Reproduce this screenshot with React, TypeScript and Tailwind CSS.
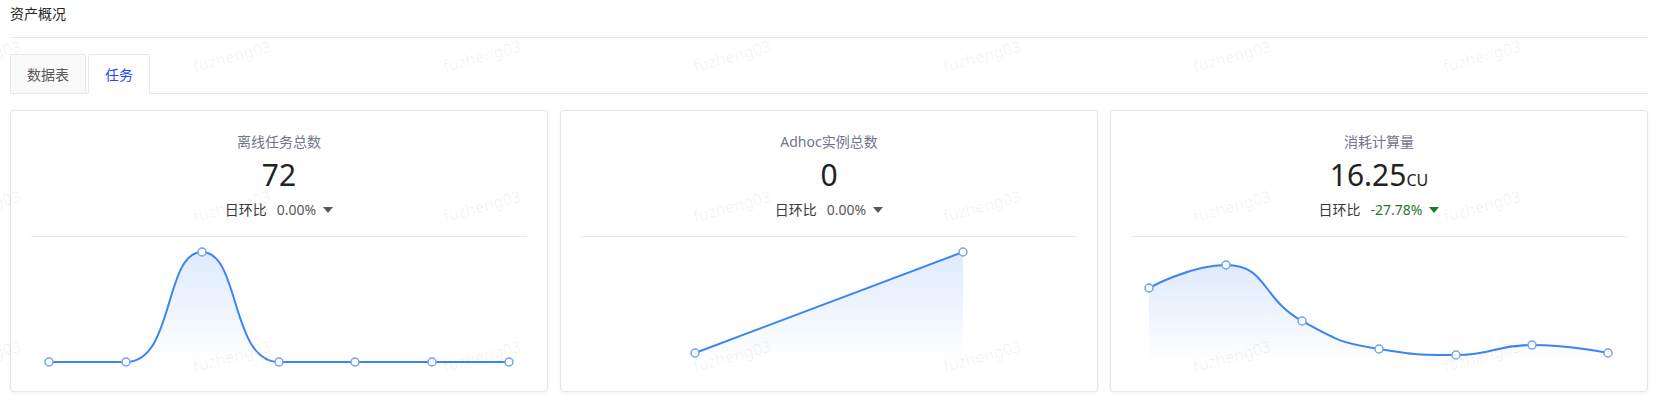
import React from "react";

type Pt = [number, number];

function smoothPath(p: Pt[], s = 0.5): string {
  const n = p.length;
  let d = `M${p[0][0]},${p[0][1]}`;
  let c0x = p[0][0];
  let c0y = p[0][1];
  for (let i = 1; i < n; i++) {
    const [x, y] = p[i];
    const [px, py] = p[i - 1];
    if (i === n - 1) {
      d += ` C${c0x},${c0y} ${x},${y} ${x},${y}`;
      break;
    }
    const [nx, ny] = p[i + 1];
    let vx = nx - px;
    let vy = ny - py;
    const lp = Math.hypot(x - px, y - py);
    const ln = Math.hypot(nx - x, ny - y);
    const r = ln / (ln + lp);
    let ncx = x + vx * s * r;
    let ncy = y + vy * s * r;
    ncx = Math.min(ncx, Math.max(nx, x));
    ncy = Math.min(ncy, Math.max(ny, y));
    ncx = Math.max(ncx, Math.min(nx, x));
    ncy = Math.max(ncy, Math.min(ny, y));
    vx = ncx - x;
    vy = ncy - y;
    let c1x = x - (vx * lp) / ln;
    let c1y = y - (vy * lp) / ln;
    c1x = Math.min(c1x, Math.max(px, x));
    c1y = Math.min(c1y, Math.max(py, y));
    c1x = Math.max(c1x, Math.min(px, x));
    c1y = Math.max(c1y, Math.min(py, y));
    vx = x - c1x;
    vy = y - c1y;
    ncx = x + (vx * ln) / lp;
    ncy = y + (vy * ln) / lp;
    d += ` C${c0x},${c0y} ${c1x},${c1y} ${x},${y}`;
    c0x = ncx;
    c0y = ncy;
  }
  return d;
}

const BASE = 125;

function Chart({ id, pts }: { id: string; pts: Pt[] }) {
  const line = smoothPath(pts);
  const area = `${line} L${pts[pts.length - 1][0]},${BASE} L${pts[0][0]},${BASE} Z`;
  return (
    <svg width="536" height="153" viewBox="0 0 536 153" className="block">
      <defs>
        <linearGradient id={id} x1="0" y1="0" x2="0" y2="1">
          <stop offset="0" stopColor="#3c85f0" stopOpacity="0.17" />
          <stop offset="1" stopColor="#3c85f0" stopOpacity="0" />
        </linearGradient>
      </defs>
      <path d={area} fill={`url(#${id})`} />
      <path d={line} fill="none" stroke="#3c85f0" strokeWidth="2" />
      {pts.map(([x, y], i) => (
        <circle key={i} cx={x} cy={y} r="4" fill="#fff" stroke="#6fa5f5" strokeWidth="1.5" />
      ))}
    </svg>
  );
}

function Triangle({ color }: { color: "gray" | "green" }) {
  return (
    <span
      className={
        color === "gray"
          ? "ml-[7px] inline-block h-0 w-0 border-l-[5px] border-r-[5px] border-t-[6px] border-l-transparent border-r-transparent border-t-[#595959]"
          : "ml-[7px] inline-block h-0 w-0 border-l-[5px] border-r-[5px] border-t-[6px] border-l-transparent border-r-transparent border-t-[#1f7a1f]"
      }
    />
  );
}

function Card({
  title,
  value,
  unit,
  pct,
  down,
  id,
  pts,
}: {
  title: string;
  value: string;
  unit?: string;
  pct: string;
  down?: boolean;
  id: string;
  pts: Pt[];
}) {
  return (
    <div className="h-[282px] rounded-[4px] border border-[#e5e5ef] bg-white pt-[21px] shadow-[0_1px_4px_rgba(0,0,0,0.05)]">
      <div className="h-[20px] text-center text-[14px] leading-[20px] text-[#72758c]">{title}</div>
      <div className="mt-[3px] h-[40px] text-center text-[30px] leading-[40px] text-[#222]">
        {value}
        {unit && <span className="text-[16px] leading-none">{unit}</span>}
      </div>
      <div className="mt-[5px] flex h-[20px] items-center justify-center text-[14px] leading-[20px]">
        <span className="text-[#3a3a3a]">日环比</span>
        <span className={down ? "ml-[10px] text-[#1f7a1f]" : "ml-[10px] text-[#595959]"}>{pct}</span>
        <Triangle color={down ? "green" : "gray"} />
      </div>
      <div className="mx-[20px] mt-[16px] h-px bg-[#e9e9f0]" />
      <Chart id={id} pts={pts} />
    </div>
  );
}

function Watermarks() {
  const items: { x: number; y: number }[] = [];
  for (let k = -1; k <= 6; k++) {
    for (const y of [56, 206, 356]) {
      items.push({ x: 232 + 250 * k, y });
    }
  }
  return (
    <div className="pointer-events-none absolute inset-0 overflow-hidden">
      {items.map((it, i) => (
        <span
          key={i}
          className="absolute whitespace-nowrap text-[16px] leading-[20px] text-[rgba(0,0,0,0.06)]"
          style={{ left: it.x, top: it.y, transform: "translate(-50%, -50%) rotate(-15deg)" }}
        >
          fuzheng03
        </span>
      ))}
    </div>
  );
}

export default function App() {
  return (
    <div className="relative h-[411px] w-[1661px] overflow-hidden bg-white font-['Noto_Sans','Noto_Sans_CJK_SC',sans-serif]">
      <div className="pl-[10px] pr-[13px]">
        <div className="h-[38px] border-b border-[#e8e8e8] pt-[4px] text-[14px] leading-[20px] text-[#262626]">
          资产概况
        </div>
        <div className="mt-[16px] flex h-[40px] items-end gap-[2px] border-b border-[#e8e8e8]">
          <div className="-mb-px flex h-[40px] items-center rounded-t-[2px] border border-[#e8e8e8] bg-[#fafafa] px-4 text-[14px] text-[#595959]">
            数据表
          </div>
          <div className="-mb-px flex h-[40px] items-center rounded-t-[2px] border border-[#e8e8e8] border-b-white bg-white px-4 text-[14px] text-[#1f48ff]">
            任务
          </div>
        </div>
        <div className="mt-[16px] grid grid-cols-3 gap-[12px]">
          <Card
            title="离线任务总数"
            value="72"
            pct="0.00%"
            id="g1"
            pts={[
              [38, 125],
              [115, 125],
              [191, 15],
              [268, 125],
              [344, 125],
              [421, 125],
              [498, 125],
            ]}
          />
          <Card
            title="Adhoc实例总数"
            value="0"
            pct="0.00%"
            id="g2"
            pts={[
              [134, 116],
              [402, 15],
            ]}
          />
          <Card
            title="消耗计算量"
            value="16.25"
            unit="CU"
            pct="-27.78%"
            down
            id="g3"
            pts={[
              [38, 51],
              [115, 28],
              [191, 84],
              [268, 112],
              [345, 118],
              [421, 108],
              [497, 116],
            ]}
          />
        </div>
      </div>
      <Watermarks />
    </div>
  );
}
